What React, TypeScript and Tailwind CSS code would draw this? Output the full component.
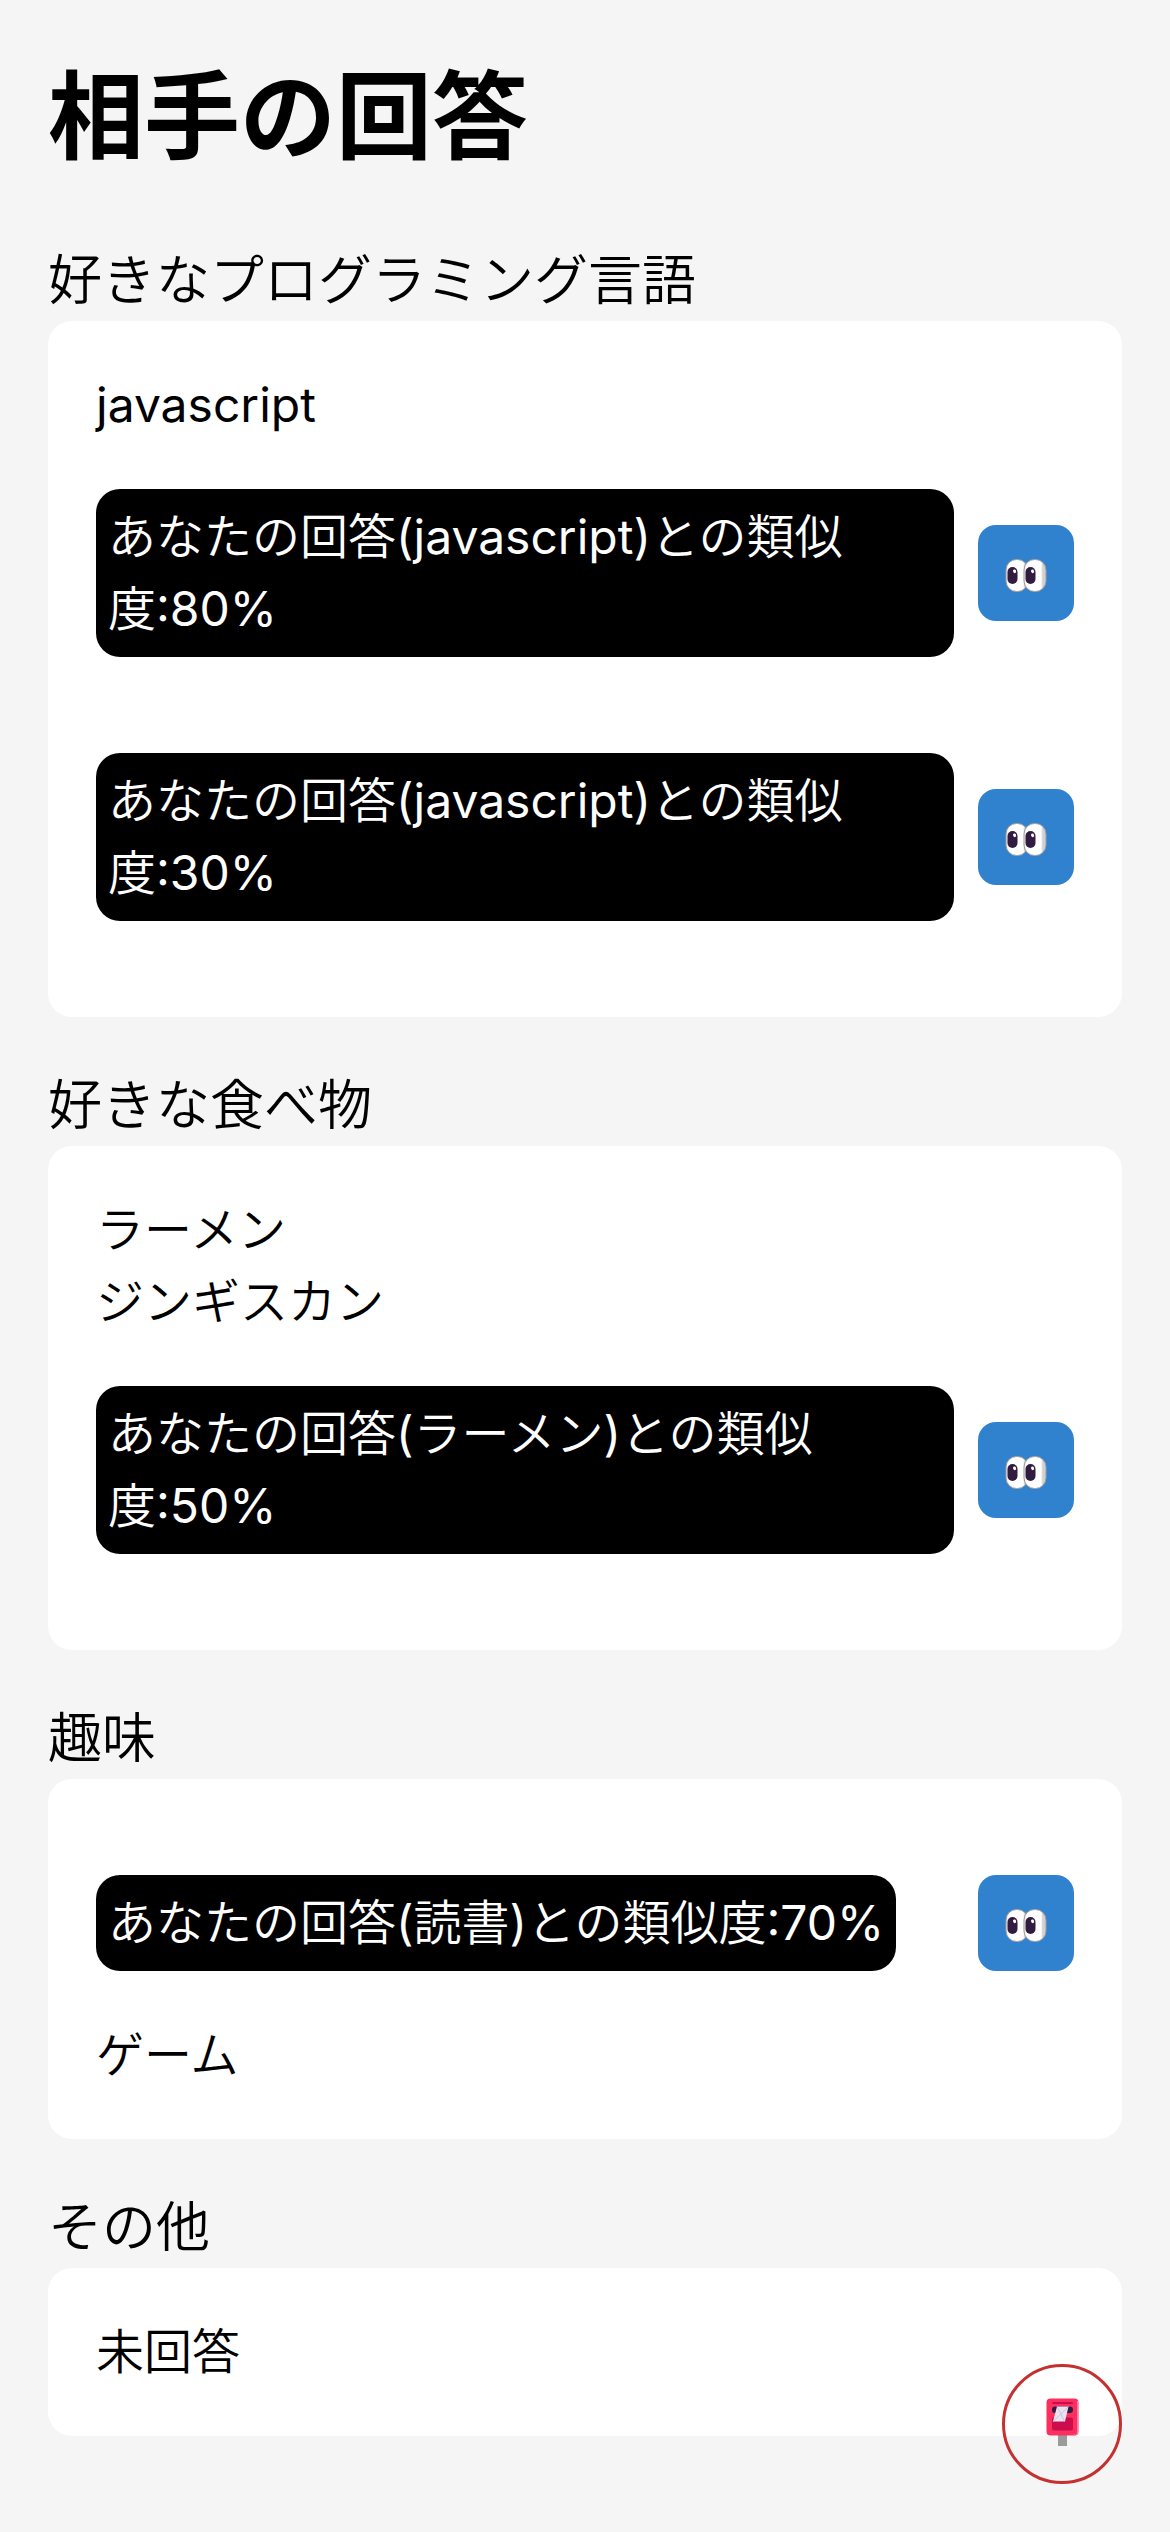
import type { ReactNode } from "react";

function EyesIcon() {
  return (
    <svg viewBox="0 0 42 33" className="h-[33px] w-[42px]" aria-hidden="true">
      <defs>
        <linearGradient id="eyeball" x1="0" x2="1" y1="0" y2="0">
          <stop offset="0" stopColor="#e4e4e4" />
          <stop offset="0.12" stopColor="#ffffff" />
          <stop offset="0.78" stopColor="#ffffff" />
          <stop offset="0.85" stopColor="#d2d2d4" />
          <stop offset="1" stopColor="#cfcfd1" />
        </linearGradient>
      </defs>
      {[1, 19].map((x) => (
        <g key={x}>
          <rect x={x} y="0.5" width="22" height="32" rx="10.5" fill="url(#eyeball)" stroke="#a09c9b" strokeWidth="1" />
          <rect x={x + 1.5} y="8" width="10" height="17" rx="5" fill="#321b41" />
          <ellipse cx={x + 8.6} cy="12.3" rx="1.5" ry="1.9" fill="#ffffff" transform={`rotate(-20 ${x + 8.6} 12.3)`} />
        </g>
      ))}
    </svg>
  );
}

function PostboxIcon() {
  return (
    <svg viewBox="0 0 33 49" className="h-[49px] w-[33px]" aria-hidden="true">
      <rect x="12" y="36" width="9" height="12" fill="#9b9b9b" />
      <rect x="0.5" y="0.5" width="32" height="37" rx="4" fill="#fb3061" />
      <path d="M31.5 3v32a3 3 0 0 1-2 2h-2" fill="none" stroke="#ff7ba1" strokeWidth="1" />
      <rect x="6" y="4" width="21" height="2" rx="1" fill="#cc0c4d" />
      <rect x="6" y="8.5" width="21" height="6.5" rx="3.2" fill="#321b41" />
      <rect x="6" y="19.5" width="21" height="13" rx="2" fill="#cc0c4d" />
      <path d="M11 8.5h11.5l-3.5 15H7z" fill="#e9e3f1" />
      <path d="M11 8.5 15 16l7.5-7.5M7 23.5l8-7.5 3.500 7.500" fill="none" stroke="#cfc4de" strokeWidth="1" />
    </svg>
  );
}

function Section({ title, children }: { title: string; children: ReactNode }) {
  return (
    <section className="mb-12">
      <h2 className="text-[54px] leading-[81px]">{title}</h2>
      <div className="flex flex-col rounded-3xl bg-white p-12">{children}</div>
    </section>
  );
}

function Similarity({ answer, percent }: { answer: string; percent: number }) {
  return (
    <div className="my-12 flex items-center justify-between gap-6">
      <p className="rounded-3xl bg-black p-3 text-white">{`あなたの回答(${answer})との類似度:${percent}%`}</p>
      <button
        type="button"
        aria-label="回答を見る"
        className="flex size-24 shrink-0 items-center justify-center rounded-[18px] bg-[#3182ce] pt-1"
      >
        <EyesIcon />
      </button>
    </div>
  );
}

export default function App() {
  return (
    <div className="min-h-screen bg-[#f5f5f5] font-[Inter,'Noto_Sans_CJK_JP_DemiLight','Noto_Sans_CJK_JP',sans-serif] text-5xl leading-[72px] text-black">
      <main lang="ja" className="px-12 pt-12 pb-px">
        <h1 className="mb-14 font-[Inter,'Noto_Sans_CJK_JP',sans-serif] text-8xl leading-[136px] font-bold">相手の回答</h1>
        <Section title="好きなプログラミング言語">
          <p>javascript</p>
          <Similarity answer="javascript" percent={80} />
          <Similarity answer="javascript" percent={30} />
        </Section>
        <Section title="好きな食べ物">
          <p>ラーメン</p>
          <p>ジンギスカン</p>
          <Similarity answer="ラーメン" percent={50} />
        </Section>
        <Section title="趣味">
          <Similarity answer="読書" percent={70} />
          <p>ゲーム</p>
        </Section>
        <Section title="その他">
          <p>未回答</p>
        </Section>
      </main>
      <button
        type="button"
        aria-label="ポスト"
        className="fixed right-12 bottom-12 flex size-[120px] items-center justify-center rounded-full border-[3px] border-[#c53030] pb-1"
      >
        <PostboxIcon />
      </button>
    </div>
  );
}
